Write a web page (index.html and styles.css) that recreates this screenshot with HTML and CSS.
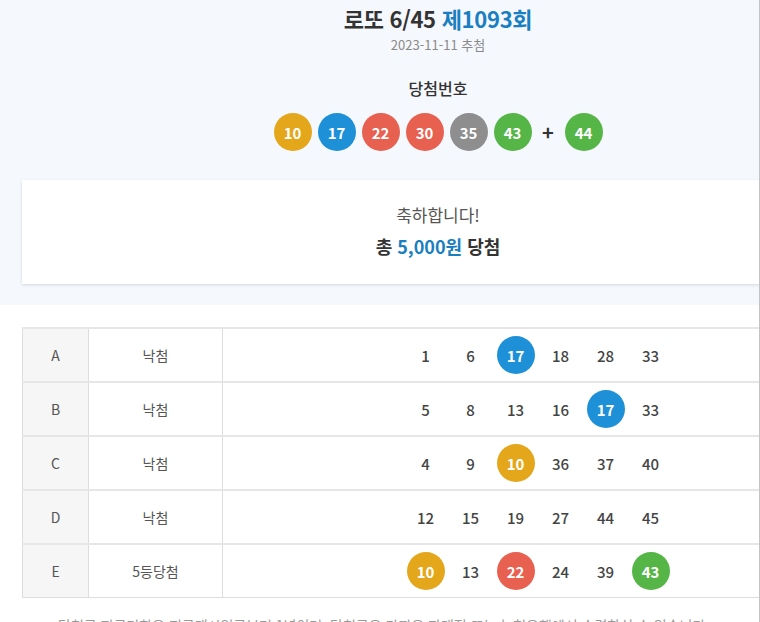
FILE: index.html
```html
<!DOCTYPE html>
<html lang="ko">
<head>
<meta charset="utf-8">
<title>로또 6/45 제1093회</title>
<link rel="stylesheet" href="styles.css">
</head>
<body>
<div class="page">
  <section class="top">
    <h1 class="title">로또 6/45 <span class="accent">제1093회</span></h1>
    <div class="date">2023-11-11 추첨</div>
    <div class="label">당첨번호</div>
    <div class="balls">
      <span class="ball y">10</span>
      <span class="ball b">17</span>
      <span class="ball r">22</span>
      <span class="ball r">30</span>
      <span class="ball g">35</span>
      <span class="ball gr">43</span>
      <span class="plus">+</span>
      <span class="ball gr">44</span>
    </div>
    <div class="card">
      <div class="congrats">축하합니다!</div>
      <div class="prize">총 <span class="accent">5,000원</span> 당첨</div>
    </div>
  </section>
  <section class="result">
    <table class="tbl">
      <tr>
        <td class="c1">A</td><td class="c2">낙첨</td>
        <td class="c3"><div class="nums"><span class="n">1</span><span class="n">6</span><span class="n hit b">17</span><span class="n">18</span><span class="n">28</span><span class="n">33</span></div></td>
      </tr>
      <tr>
        <td class="c1">B</td><td class="c2">낙첨</td>
        <td class="c3"><div class="nums"><span class="n">5</span><span class="n">8</span><span class="n">13</span><span class="n">16</span><span class="n hit b">17</span><span class="n">33</span></div></td>
      </tr>
      <tr>
        <td class="c1">C</td><td class="c2">낙첨</td>
        <td class="c3"><div class="nums"><span class="n">4</span><span class="n">9</span><span class="n hit y">10</span><span class="n">36</span><span class="n">37</span><span class="n">40</span></div></td>
      </tr>
      <tr>
        <td class="c1">D</td><td class="c2">낙첨</td>
        <td class="c3"><div class="nums"><span class="n">12</span><span class="n">15</span><span class="n">19</span><span class="n">27</span><span class="n">44</span><span class="n">45</span></div></td>
      </tr>
      <tr>
        <td class="c1">E</td><td class="c2">5등당첨</td>
        <td class="c3"><div class="nums"><span class="n hit y">10</span><span class="n">13</span><span class="n hit r">22</span><span class="n">24</span><span class="n">39</span><span class="n hit gr">43</span></div></td>
      </tr>
    </table>
    <p class="note">당첨금 지급기한은 지급개시일로부터 1년이며, 당첨금은 가까운 판매점 또는 농협은행에서 수령하실 수 있습니다.</p>
  </section>
</div>
<div class="edge"></div>
</body>
</html>
```

FILE: styles.css
```css
html, body {
  margin: 0;
  padding: 0;
  background: #ffffff;
  overflow: hidden;
}
body {
  font-family: "Noto Sans CJK KR", "Noto Sans", sans-serif;
  color: #333333;
}
.page {
  width: 876px;
}
.top {
  background: #f5f8fc;
  padding: 3px 22px 21px;
  text-align: center;
}
.title {
  margin: 0;
  font-size: 22px;
  line-height: 30px;
  font-weight: 700;
  color: #333333;
  letter-spacing: -0.3px;
}
.accent {
  color: #1a7fc0;
}
.date {
  margin-top: 2px;
  font-size: 13px;
  line-height: 20px;
  color: #8a8a8a;
}
.label {
  margin-top: 21px;
  font-size: 16px;
  line-height: 24px;
  font-weight: 500;
  color: #333333;
}
.balls {
  margin-top: 13px;
  display: flex;
  justify-content: center;
  align-items: center;
  gap: 6px;
}
.ball, .hit {
  width: 38px;
  height: 38px;
  border-radius: 50%;
  display: flex;
  align-items: center;
  justify-content: center;
  color: #ffffff;
  font-size: 15px;
  font-weight: 700;
}
.plus {
  width: 21px;
  text-align: center;
  font-size: 20px;
  font-weight: 700;
  color: #333333;
  line-height: 38px;
}
.y { background: #e4a71b; }
.b { background: #1e90d8; }
.r { background: #e8604f; }
.g { background: #8e8e8e; }
.gr { background: #56b547; }
.card {
  margin-top: 29px;
  background: #ffffff;
  box-shadow: 0 1px 3px rgba(0, 0, 0, 0.14);
  padding: 23px 0 24px;
}
.congrats {
  font-size: 17px;
  line-height: 24px;
  font-weight: 400;
  color: #555555;
}
.prize {
  margin-top: 5px;
  font-size: 18px;
  line-height: 28px;
  font-weight: 700;
  color: #333333;
}
.result {
  padding: 22px 22px 0;
}
.tbl {
  width: 100%;
  border-collapse: collapse;
}
.tbl td {
  border: 1px solid #dddddd;
  height: 52px;
  padding: 0;
  text-align: center;
  font-size: 14px;
  color: #555555;
}
.tbl tr td {
  border-top: 2px solid #e6e6e6;
}
.c1 {
  width: 65px;
  background: #f6f6f6;
}
.c2 {
  width: 133px;
  color: #666666;
}
.nums {
  display: flex;
  justify-content: center;
  align-items: center;
  gap: 7px;
}
.n {
  width: 38px;
  height: 38px;
  display: flex;
  align-items: center;
  justify-content: center;
  font-size: 15px;
  font-weight: 500;
  color: #444444;
}
.n.hit {
  color: #ffffff;
  font-weight: 700;
}
.note {
  margin: 16px 0 0;
  padding-left: 36px;
  font-size: 14px;
  line-height: 22px;
  color: #999999;
  white-space: nowrap;
}
.edge {
  position: fixed;
  top: 0;
  right: 0;
  width: 1px;
  height: 100%;
  background: #c4c4c4;
}
```
